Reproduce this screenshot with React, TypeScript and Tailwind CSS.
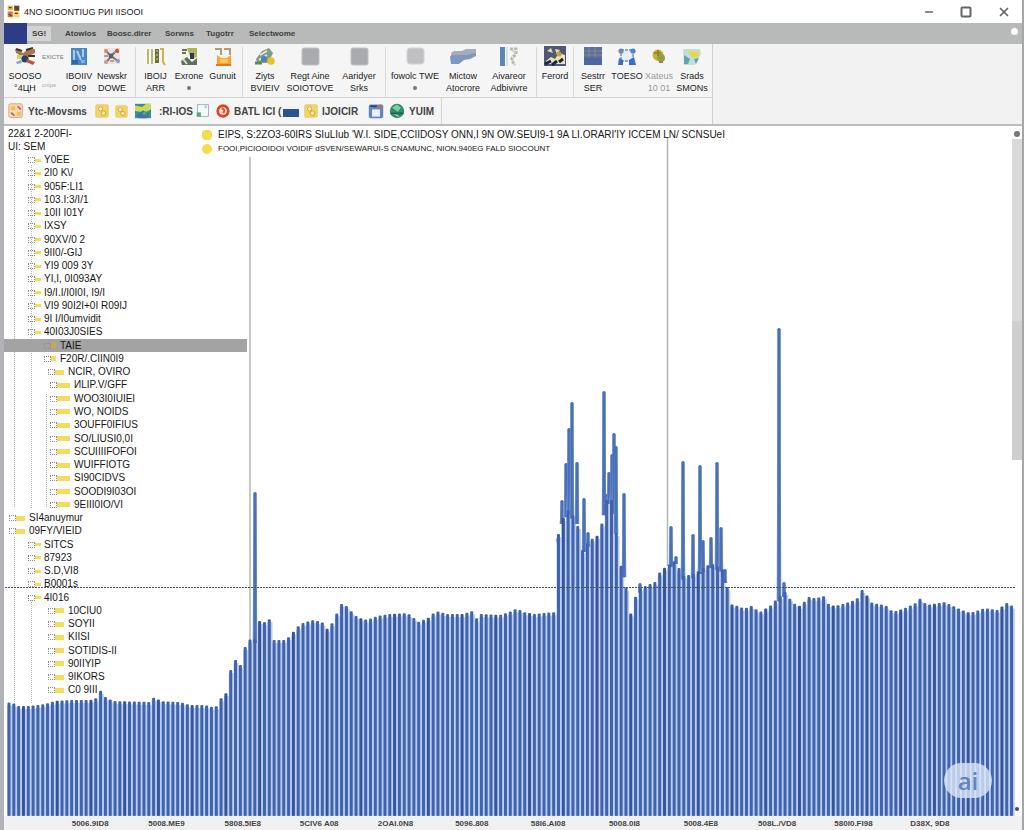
/**
 * App.tsx — Desktop signal viewer window.
 *
 * Layout, top to bottom: title bar, menu bar, ribbon with a quick-access row,
 * workspace (tree + level plot) and the frequency axis.
 */

import type { ReactNode } from 'react'
import { Minus, Square, X } from 'lucide-react'

// ---------------------------------------------------------------- icons

const PAPER = '#f4f1ea'

/** Small 20x20 drawings used by the ribbon and the quick-access row. */
const ICONS: Record<string, ReactNode> = {
  app: (
    <>
      <path d="M1 1h8v7H1z" fill="#f0b93c" />
      <path d="M11 1h8v8h-8z" fill="#6b4a3a" />
      <path d="M1 10h8v9H1z" fill="#d9784a" />
      <path d="M10 10h9v9h-9z" fill="#f3d65c" />
      <path d="M3 4h4M13 3l4 4M12 13h5M3 14l4 3" stroke="#5a3f33" strokeWidth="2" />
    </>
  ),
  tools: (
    <>
      <path d="M0 2l8 4 4-3 8-1v4l-6 3-6 1-7-4z" fill="#a8764f" />
      <path d="M1 2l6 2M11 3l7-2M13 9h7" stroke="#3c3030" strokeWidth="2" />
      <rect x="2" y="8" width="6" height="4" fill="#d7d063" />
      <circle cx="10" cy="12" r="3.6" fill="#24406f" />
      <path d="M12 12l8 3-2 3-7-3z" fill="#c8503f" />
      <path d="M1 15l5-2 1 3-5 1z" fill="#8fa7c9" />
    </>
  ),
  blueDoc: (
    <>
      <rect x="2" y="1" width="16" height="17" fill="#4a86c6" />
      <path d="M5 3v11M8 4l4 9M14 2v8" stroke="#a9cbeb" strokeWidth="2" />
      <rect x="3" y="13" width="6" height="4" fill="#2c68aa" />
      <rect x="12" y="13" width="4" height="3" fill="#7fb0e0" />
    </>
  ),
  network: (
    <>
      <rect x="2" y="1" width="16" height="16" fill="#ece2e0" />
      <path d="M3 3l6 6 7-7M9 9l-5 7M9 9l8 6" stroke="#8c6a5f" strokeWidth="2" fill="none" />
      <path d="M2 9h4M12 5h5M8 14h4" stroke="#b59d98" strokeWidth="2" />
      <circle cx="4" cy="4" r="2" fill="#d08a72" />
      <circle cx="15" cy="4" r="2" fill="#c7513f" />
      <circle cx="9" cy="9" r="2.4" fill="#4b5f86" />
      <circle cx="4" cy="15" r="2" fill="#b4a39f" />
      <circle cx="16" cy="14" r="2" fill="#7aa0cf" />
    </>
  ),
  books: (
    <>
      <path d="M2 2v15M6 2v15" stroke="#a5a744" strokeWidth="1.5" />
      <path d="M9 2h4v14H9z" fill="#6a6d3c" />
      <path d="M14 2l3 0 0 13 2 3" stroke="#c6b64a" strokeWidth="2" fill="none" />
      <path d="M10 4h2M10 8h2M10 12h2" stroke="#e6d97b" />
    </>
  ),
  explore: (
    <>
      <rect x="3" y="1" width="15" height="17" fill={PAPER} />
      <path d="M8 1h10v9l-6 2z" fill="#aeb353" />
      <path d="M3 3h5M3 6h4" stroke="#6f7350" strokeWidth="2" />
      <path d="M2 14l6-4 5 5 5-4v7H3z" fill="#5d7160" />
      <rect x="11" y="6" width="4" height="6" fill="#2d3b52" />
      <path d="M4 12l4 5" stroke="#d9dfc9" strokeWidth="2" />
    </>
  ),
  flask: (
    <>
      <path d="M4 8v9h14V8l-4 3H8z" fill="#f2a62f" />
      <path d="M2 2h6v6M11 2h6v6" stroke="#b39c70" strokeWidth="2" fill="none" />
      <path d="M7 12h8v4H7z" fill="#fbc95b" />
      <path d="M3 18h15" stroke="#e0762a" strokeWidth="2" />
    </>
  ),
  parts: (
    <>
      <path d="M1 12l6-8 7-3 4 5-5 10H2z" fill="#7e9c8c" />
      <path d="M5 8l7-4M4 13l8-5" stroke="#e9eedb" strokeWidth="1.5" />
      <circle cx="9" cy="12" r="3" fill="#4f7fb5" />
      <circle cx="16" cy="14" r="3.8" fill="#e7c22e" />
      <path d="M0 16h7" stroke="#5b8d4f" strokeWidth="3" />
    </>
  ),
  block: <rect x="2" y="1" width="17" height="17" rx="2" fill="#a9abae" stroke="#bfc1c3" />,
  blockLight: <rect x="2" y="1" width="17" height="16" rx="3" fill="#bfc0c2" stroke="#d2d3d4" />,
  cloud: (
    <>
      <path d="M-3 10l3-5h9l4-3h10v7l-6 3-6 1-5 4h-8z" fill="#8097bf" />
      <path d="M-2 6l3-2h8l4-2h10v4l-10 2H-1z" fill="#a7acb6" />
    </>
  ),
  pillar: (
    <>
      <rect x="1" y="0" width="5" height="19" fill="#5c86b4" />
      <path d="M8 0v19" stroke="#b9c9da" />
      <path d="M11 2h6v5l-4 4v3l3 4" stroke="#b4bab0" strokeWidth="3" fill="none" strokeDasharray="3 1" />
      <circle cx="15" cy="4" r="2" fill="#d7d8cd" />
    </>
  ),
  photo: (
    <>
      <rect x="-1" y="-1" width="22" height="20" fill="#4f5874" />
      <path d="M1 14l5-4 4 2 4-6 6 2v9H1z" fill="#e9e2c8" />
      <path d="M2 4l4-3 2 5zM10 2l5 1-3 5z" fill="#dfd9b0" />
      <circle cx="14" cy="7" r="2.5" fill="#c99e35" />
      <path d="M0 17l6-3M7 18l5-4M14 15l4-3" stroke="#20263a" strokeWidth="3" />
    </>
  ),
  board: (
    <>
      <rect x="1" y="0" width="18" height="18" fill="#5e6f93" />
      <path d="M1 4h18M1 8h18M6 0v10M12 0v10" stroke="#7f8ba5" />
      <rect x="1" y="11" width="18" height="7" fill="#4d68a0" />
    </>
  ),
  frame: (
    <>
      <path d="M4 3h12v11H4z" fill="#e3eefa" stroke="#8caad4" strokeDasharray="3 1" strokeWidth="2" />
      <circle cx="4" cy="4" r="2.6" fill="#7489aa" />
      <circle cx="16" cy="4" r="2.6" fill="#4b7fd0" />
      <path d="M2 11l4 2 0 5H1zM12 13l5-3 2 8h-7z" fill="#3a6ecb" />
    </>
  ),
  plug: (
    <>
      <circle cx="9" cy="8" r="5.500" fill="#c6b32f" />
      <circle cx="12" cy="11" r="4" fill="#8fa04b" />
      <path d="M5 6h7M9 3v6" stroke="#8f7d2a" strokeWidth="1.5" />
      <path d="M10 15h4" stroke="#c4744a" strokeWidth="2" />
    </>
  ),
  map: (
    <>
      <path d="M1 2h17l1 5-6 11H2z" fill="#c3dfd2" />
      <path d="M6 4l11 1v4l-6 2z" fill="#ecd647" />
      <path d="M2 8l6 4-2 5H2zM12 12l5-1-3 6z" fill="#5aa5b6" />
    </>
  ),
  chip: (
    <>
      <rect x="1" y="1" width="17" height="17" rx="2" fill="#f5d9b9" stroke="#dc9477" />
      <path d="M4 4h5v5H4zM11 11h5v5h-5z" fill="#eac04e" />
      <path d="M12 4l4 4M4 12l4 4" stroke="#c0594a" strokeWidth="2" />
    </>
  ),
  tile: (
    <>
      <rect x="1" y="1" width="18" height="18" rx="2" fill="#f3d65c" stroke="#dfc37c" />
      <circle cx="8" cy="7" r="3" fill="#fdf3c1" stroke="#cf8d3b" />
      <circle cx="12" cy="13" r="3.4" fill="#fbe998" stroke="#b58a42" />
    </>
  ),
  land: (
    <>
      <rect x="0" y="1" width="20" height="18" fill="#3c8f8c" />
      <path d="M0 3l9 2 5-4h6v7l-8 4-12-2z" fill="#cfd955" />
      <path d="M2 15l8-6 8 4-3 6H5z" fill="#3d72b4" />
      <circle cx="12" cy="13" r="2.4" fill="#4fae5b" />
    </>
  ),
  page: (
    <>
      <rect x="2" y="1" width="16" height="17" fill="#f3fbf8" stroke="#7f9fae" />
      <path d="M1 12h6v6H1z" fill="#5ba184" />
      <path d="M12 2h4v4h-4z" fill="#b7d2dd" />
    </>
  ),
  target: (
    <>
      <circle cx="10" cy="10" r="7.500" fill="#fbe3d6" stroke="#d8482b" strokeWidth="4" />
      <path d="M8 7c4-1 5 3 2 6" stroke="#e0582f" strokeWidth="3" fill="none" />
    </>
  ),
  calendar: (
    <>
      <rect x="1" y="2" width="18" height="17" rx="2" fill="#5f86bd" />
      <rect x="5" y="8" width="10" height="9" fill="#e9f0f8" />
      <path d="M3 4h8" stroke="#27416f" strokeWidth="2" />
      <circle cx="15" cy="4" r="2" fill="#d9624d" />
    </>
  ),
  globe: (
    <>
      <circle cx="10" cy="10" r="9" fill="#2e8f6c" />
      <path d="M4 6l6-4 5 4-4 5zM4 13h6l3 5" fill="#86c9a8" />
      <path d="M2 13h16" stroke="#1d5d48" strokeWidth="2" />
    </>
  ),
}

function Icon({ name, className = 'size-5' }: { name: string; className?: string }) {
  return (
    <svg viewBox="0 0 20 20" fill="none" aria-hidden="true" className={`shrink-0 overflow-visible ${className}`}>
      {ICONS[name]}
    </svg>
  )
}

// ---------------------------------------------------------------- ribbon

interface Tool {
  icon: string
  top: string
  bottom?: string
  width: string
  muted?: boolean
  /** Draws the small round launcher under the first label line. */
  dot?: boolean
}

const GROUPS: { width: string; tools: Tool[] }[] = [
  {
    width: 'w-[107px]',
    tools: [
      { icon: 'books', top: 'IBOIJ', bottom: 'ARR', width: 'w-[32px]' },
      { icon: 'explore', top: 'Exrone', width: 'w-[35px]', dot: true },
      { icon: 'flask', top: 'Gunuit', width: 'w-[32px]' },
    ],
  },
  {
    width: 'w-[143px]',
    tools: [
      { icon: 'parts', top: 'Ziyts', bottom: 'BVIEIV', width: 'w-[36px]' },
      { icon: 'block', top: 'Regt Aine', bottom: 'SOIOTOVE', width: 'w-[54px]' },
      { icon: 'block', top: 'Aaridyer', bottom: 'Srks', width: 'w-[44px]' },
    ],
  },
  {
    width: 'w-[151px]',
    tools: [
      { icon: 'blockLight', top: 'fowolc TWE', width: 'w-[52px]', dot: true },
      { icon: 'cloud', top: 'Mictow', bottom: 'Atocrore', width: 'w-[44px]' },
      { icon: 'pillar', top: 'Aivareor', bottom: 'Adbivivre', width: 'w-[48px]' },
    ],
  },
  { width: 'w-[37px]', tools: [{ icon: 'photo', top: 'Ferord', width: 'w-[32px]' }] },
  {
    width: 'w-[138px]',
    tools: [
      { icon: 'board', top: 'Sestrr', bottom: 'SER', width: 'w-[34px]' },
      { icon: 'frame', top: 'TOESO', width: 'w-[34px]' },
      { icon: 'plug', top: 'Xateus', bottom: '10 01', width: 'w-[30px]', muted: true },
      { icon: 'map', top: 'Srads', bottom: 'SMONs', width: 'w-[36px]' },
    ],
  },
]

function ToolButton({ icon, top, bottom, width, muted, dot }: Tool) {
  return (
    <button
      type="button"
      className={`flex shrink-0 flex-col items-center whitespace-nowrap text-[9px] leading-3 ${width} ${
        muted ? 'text-[#999]' : 'text-[#222]'
      }`}
    >
      <Icon name={icon} />
      <span className="mt-[3px]">{top}</span>
      {bottom && <span>{bottom}</span>}
      {dot && <span className="mt-1 size-1 rounded-full bg-[#777]" />}
    </button>
  )
}

function Ribbon() {
  return (
    <div className="flex h-[82px] border-b-2 border-[#bdbdbd] bg-[#f2f2f2]">
      <div className="flex flex-col border-r border-[#cfcfcf] bg-[#f5f5f5] pt-[3px]">
        <div className="flex h-[51px] border-b border-[#d4d4d4]">
          <div className="flex w-[132px] items-start border-r border-[#d8d8d8] pl-1">
            <ToolButton icon="tools" top="SOOSO" bottom="°4ЦН" width="w-[34px]" />
            <div className="flex w-[22px] flex-col pt-1 text-[6px] leading-3 whitespace-nowrap text-[#777]">
              <span>EXICTE</span>
              <span className="mt-4 text-[#aaa]">cnips</span>
            </div>
            <ToolButton icon="blueDoc" top="IBOIIV" bottom="OI9" width="w-[30px]" />
            <ToolButton icon="network" top="Newskr" bottom="DOWE" width="w-[36px]" />
          </div>
          {GROUPS.map((group, i) => (
            <div
              key={i}
              className={`flex items-start justify-center border-r border-[#d8d8d8] last:border-r-0 ${group.width}`}
            >
              {group.tools.map((tool) => (
                <ToolButton key={tool.top} {...tool} />
              ))}
            </div>
          ))}
        </div>
        <QuickBar />
      </div>
    </div>
  )
}

function QuickBar() {
  const button = 'flex shrink-0 items-center whitespace-nowrap'
  return (
    <div className="flex h-[26px] w-[438px] items-center border-r border-[#d4d4d4] pl-1 text-[10px] font-bold text-[#444]">
      <button type="button" className={`${button} w-[87px] gap-1`}>
        <Icon name="chip" className="size-4" />
        Ytc-Movsms
      </button>
      <button type="button" aria-label="Layers" className="w-5 shrink-0">
        <Icon name="tile" className="size-[14px]" />
      </button>
      <button type="button" aria-label="Markers" className="w-5 shrink-0">
        <Icon name="tile" className="size-[13px]" />
      </button>
      <button type="button" className={`${button} w-[61px] gap-2`}>
        <Icon name="land" className="size-4" />
        :RI-IOS
      </button>
      <button type="button" aria-label="Page" className="w-5 shrink-0">
        <Icon name="page" className="size-[14px]" />
      </button>
      <button type="button" className={`${button} w-[62px] gap-1`}>
        <Icon name="target" className="size-[14px]" />
        BATL ICI
      </button>
      <button type="button" aria-label="Range" className={`${button} w-[26px]`}>
        (<span className="mt-1 ml-[2px] h-2 w-4 bg-[#2a5394]" />
      </button>
      <button type="button" className={`${button} w-[64px] gap-1`}>
        <Icon name="tile" className="size-[14px]" />
        IJOICIR
      </button>
      <button type="button" aria-label="Calendar" className="w-[21px] shrink-0">
        <Icon name="calendar" className="size-4" />
      </button>
      <button type="button" className={`${button} gap-1`}>
        <Icon name="globe" className="size-4" />
        YUIM
      </button>
    </div>
  )
}

// ---------------------------------------------------------------- tree

/** Indent and lead-column classes for each kind of row. */
const LEVELS = {
  root: { pad: 'pl-1', lead: 'w-0' },
  branch: { pad: 'pl-[5px]', lead: 'w-5' },
  item: { pad: 'pl-6', lead: 'w-4' },
  sub: { pad: 'pl-10', lead: 'w-4' },
  leaf: { pad: 'pl-11', lead: 'w-5' },
  deep: { pad: 'pl-[46px]', lead: 'w-6' },
}

type Level = keyof typeof LEVELS

const TREE: [Level, string][] = [
  ['root', '22&1 2-200FI-'],
  ['root', 'UI: SEM'],
  ['item', 'Y0EE'],
  ['item', '2I0 K\\/'],
  ['item', '905F:LI1'],
  ['item', '103.I:3/I/1'],
  ['item', '10II I01Y'],
  ['item', 'IXSY'],
  ['item', '90XV/0 2'],
  ['item', '9II0/-GIJ'],
  ['item', 'YI9 009 3Y'],
  ['item', 'YI,I, 0I093AY'],
  ['item', 'I9/I.I/I0I0I, I9/I'],
  ['item', 'VI9 90I2I+0I R09IJ'],
  ['item', '9I I/I0umvidit'],
  ['item', '40I03J0SIES'],
  ['sub', 'TAIE'],
  ['sub', 'F20R/.CIIN0I9'],
  ['leaf', 'NCIR, OVIRO'],
  ['deep', 'ИLIP.V/GFF'],
  ['deep', 'WOO3I0IUIEI'],
  ['deep', 'WO, NOIDS'],
  ['deep', '3OUFF0IFIUS'],
  ['deep', 'SO/LIUSI0,0I'],
  ['deep', 'SCUIIIIFOFOI'],
  ['deep', 'WUIFFIOTG'],
  ['deep', 'SI90CIDVS'],
  ['deep', 'SOODI9I03OI'],
  ['deep', '9EIII0IO/VI'],
  ['branch', 'SI4anuymur'],
  ['branch', '09FY/VIEID'],
  ['item', 'SITCS'],
  ['item', '87923'],
  ['item', 'S.D,VI8'],
  ['item', 'B0001s'],
  ['item', '4I016'],
  ['leaf', '10CIU0'],
  ['leaf', 'SOYII'],
  ['leaf', 'KIISI'],
  ['leaf', 'SOTIDIS-II'],
  ['leaf', '90IIYIP'],
  ['leaf', '9IKORS'],
  ['leaf', 'C0 9III'],
]

const SELECTED = 16

function TreeRow({ level, label, selected }: { level: Level; label: string; selected: boolean }) {
  const { pad, lead } = LEVELS[level]
  const folder = level === 'item' ? 'mr-[3px] h-[3px]' : 'mr-1 h-[5px]'
  return (
    <button
      type="button"
      className={`flex items-center whitespace-nowrap ${pad} ${
        selected ? 'w-[243px] bg-[#a3a3a3]' : 'w-full'
      }`}
    >
      {level !== 'root' && (
        <span className={`flex shrink-0 items-center ${lead}`}>
          <span className="h-[6px] w-[7px] border border-dotted border-[#8c8c8c]" />
          <span className={`flex-1 ${folder} ${selected ? 'bg-[#c9a94a]' : 'bg-[#f4dd5c]'}`} />
        </span>
      )}
      {label}
    </button>
  )
}

function Tree() {
  return (
    <nav
      aria-label="Sources"
      className="grid h-[571px] w-[196px] shrink-0 auto-rows-fr pt-px text-[10px] leading-3 text-[#161616]"
    >
      {TREE.map(([level, label], i) => (
        <TreeRow key={i} level={level} label={label} selected={i === SELECTED} />
      ))}
    </nav>
  )
}

// ---------------------------------------------------------------- plot

const BASE_Y = 816
const PITCH = 4.82

/** Noise-floor outline as [x, y] pairs. */
const FLOOR: [number, number][] = [
  [6, 702], [13, 703], [17, 706], [30, 706], [45, 704], [55, 701], [70, 700], [90, 700],
  [97, 698], [101, 690], [106, 698], [115, 701], [150, 702], [155, 696], [160, 701],
  [180, 702], [190, 705], [205, 705], [212, 707], [217, 706], [219, 700], [224, 696],
  [228, 690], [231, 668], [234, 656], [237, 664], [243, 666], [246, 640], [255, 639],
  [259, 621], [265, 622], [269, 617], [272, 640], [286, 640], [295, 630], [300, 624],
  [312, 620], [322, 622], [326, 630], [333, 622], [340, 606], [343, 602], [350, 610],
  [357, 617], [367, 620], [377, 616], [390, 614], [407, 613], [412, 616], [418, 622],
  [428, 618], [436, 611], [447, 614], [466, 614], [470, 608], [476, 619], [480, 614],
  [500, 615], [512, 611], [517, 608], [523, 612], [535, 614], [555, 612], [557, 540],
  [562, 520], [568, 510], [577, 520], [581, 552], [590, 540], [600, 534], [606, 500],
  [613, 500], [619, 560], [625, 576], [628, 612], [632, 614],
  [637, 590], [645, 586], [655, 582], [661, 570], [667, 566], [676, 560], [682, 576],
  [694, 574], [706, 566], [712, 564], [722, 568], [728, 590], [730, 604], [738, 606],
  [745, 609], [750, 605], [760, 612], [770, 606], [776, 600], [785, 592], [793, 603],
  [800, 606], [812, 594], [816, 602], [822, 592], [826, 603], [835, 606], [850, 602],
  [858, 598], [861, 586], [865, 600], [868, 593], [872, 603], [885, 605], [893, 612],
  [905, 608], [918, 602], [921, 597], [926, 605], [945, 602], [957, 608], [970, 613],
  [985, 608], [997, 610], [1008, 602], [1016, 610],
]

/** Carriers that rise above the floor as [x, y] pairs. */
const PEAKS: [number, number][] = [
  [255, 492], [558, 538], [562, 500], [566, 463], [569, 428], [572, 402], [577, 462],
  [584, 498], [588, 532], [604, 391], [607, 494], [609, 472], [612, 454], [614, 433],
  [616, 446], [624, 493], [640, 583], [671, 526], [676, 556], [683, 461], [693, 534],
  [700, 465], [703, 540], [711, 537], [717, 462], [721, 527], [725, 569], [779, 328],
  [784, 582],
]

function floorAt(x: number) {
  const i = Math.max(1, FLOOR.findIndex(([px]) => px >= x))
  const [x0, y0] = FLOOR[i - 1]
  const [x1, y1] = FLOOR[i]
  return y0 + ((y1 - y0) * (x - x0)) / (x1 - x0)
}

const BARS = Array.from({ length: 209 }, (_, i) => {
  const x = 9 + i * PITCH
  return { x, y: floorAt(x), dark: i % 7 === 3 }
})

function Plot() {
  return (
    <svg
      viewBox="4 126 1018 690"
      preserveAspectRatio="none"
      role="img"
      aria-label="Level plot"
      className="absolute inset-0 size-full"
    >
      <path d="M14.5 150V508M31.5 165V508M46.5 394V508M14.5 537V704M31.5 600V704" stroke="#b5b5b5" strokeDasharray="1 1" />
      <path d="M250 157V640M667.500 137V566" stroke="#b3b6ba" strokeWidth="1.500" />

      {/* Pale backing shows through between the bars */}
      {BARS.map(({ x, y }) => (
        <rect key={x} x={x - 2} y={y + 3} width={5.2} height={BASE_Y - y - 3} fill="#bccdf3" />
      ))}
      {PEAKS.map(([x, y]) => {
        const bottom = floorAt(x) + 4
        return (
          <g key={x}>
            <path d={`M${x - 2.5} ${bottom}L${x - 1} ${y + 6}h2L${x + 2.5} ${bottom}z`} fill="#9fb6e4" />
            <path d={`M${x - 1.7} ${bottom}V${y + 1}q1.700-2 3.400 0V${bottom}z`} fill="#4a70b8" />
          </g>
        )
      })}
      {BARS.map(({ x, y, dark }) => (
        <rect key={x} x={x - 1.5} y={y} width={3} height={BASE_Y - y} rx={1} fill={dark ? '#34559c' : '#4064ac'} />
      ))}

      <path d="M5 587.500H1016" stroke="#4b4f57" strokeDasharray="2 1" />
    </svg>
  )
}

function Workspace() {
  return (
    <main className="relative flex flex-1 bg-white">
      <Plot />
      <div className="relative flex min-w-0 flex-1">
        <Tree />
        <div className="flex flex-col pt-[2px] pl-[2px] leading-[14px] whitespace-nowrap text-[#161616]">
          <p className="flex items-center gap-[6px] text-[10px]">
            <span className="size-[10px] rounded-sm bg-[#f6dc4a]" />
            EIPS, S:2ZO3-60IRS SIuLIub 'W.I. SIDE,CCIIDOSY ONN,I 9N OW.SEUI9-1 9A LI.ORARI'IY ICCEM LN/ SCNSUeI
          </p>
          <p className="flex items-center gap-[6px] text-[8px]">
            <span className="size-[10px] rounded-full bg-[#f6dc4a]" />
            FOOI,PICIOOIDOI VOIDIF dSVEN/SEWARUI-S CNAMUNC, NION.940EG FALD SIOCOUNT
          </p>
        </div>
      </div>
      <div className="relative flex w-[10px] flex-col">
        <span className="mt-[5px] ml-[2px] size-[6px] rounded-full bg-[#777]" />
        <span className="mt-[2px] h-[182px] bg-[#d9d9d9]" />
        <span className="h-[139px] bg-[#cfcfcf]" />
        <span className="mt-auto mb-[5px] ml-[3px] size-1 rounded-full bg-[#35507f]" />
      </div>
      <div className="absolute right-[30px] bottom-[18px] flex h-[35px] w-12 items-center justify-center rounded-full bg-[#dbe6f6]/80 font-['Open_Sans',sans-serif] text-[24px] leading-none font-semibold text-[#6384c4]">
        ai
      </div>
    </main>
  )
}

// ---------------------------------------------------------------- frame

const TICKS = [
  '5006.9ID8', '5008.ME9', '5808.5IE8', '5CIV6 A08', '2OAI.0N8', '5096.808',
  '58I6.AI08', '5008.0I8', '5008.4E8', '508L./VD8', '580I0.FI98', 'D38X, 9D8',
]

const MENUS = [
  { label: 'Atowlos', width: 'w-[42px]' },
  { label: 'Boosc.direr', width: 'w-[58px]' },
  { label: 'Sorwns', width: 'w-[41px]' },
  { label: 'Tugotrr', width: 'w-[43px]' },
  { label: 'Selectwome', width: 'w-[56px]' },
]

function TitleBar() {
  return (
    <header className="flex h-[23px] items-center bg-white pl-[3px]">
      <Icon name="app" className="size-[13px]" />
      <h1 className="ml-1 flex-1 text-[9px] leading-4 text-[#222]">
        4NO SIOONTIUG PИI IISOOI
      </h1>
      <div className="flex items-center gap-[25px] pr-[11px] text-[#666]">
        <button type="button" aria-label="Minimize"><Minus size={12} strokeWidth={3} /></button>
        <button type="button" aria-label="Maximize"><Square size={12} strokeWidth={4} /></button>
        <button type="button" aria-label="Close"><X size={14} strokeWidth={3} /></button>
      </div>
    </header>
  )
}

function MenuBar() {
  return (
    <nav aria-label="Menu" className="flex h-[21px] items-center bg-[#b8b9b9] text-[8px] font-bold text-[#3e3e3e]">
      <span className="h-full w-[23px] bg-[#2c3c86]" />
      <button type="button" className="mr-[14px] h-[15px] w-6 bg-[#d3d3d3]">SG!</button>
      {MENUS.map(({ label, width }) => (
        <button key={label} type="button" className={`shrink-0 text-left whitespace-nowrap ${width}`}>
          {label}
        </button>
      ))}
      <span className="mr-1 ml-auto mb-1 size-[7px] rounded-full bg-white" />
    </nav>
  )
}

export default function App() {
  return (
    <div className="flex min-h-screen flex-col overflow-hidden border-r-2 border-l-4 border-r-[#a6a6a6] border-l-[#b1b3b8] bg-white font-['Liberation_Sans',Arial,sans-serif]">
      <TitleBar />
      <MenuBar />
      <Ribbon />
      <Workspace />
      <footer className="grid h-[14px] grid-cols-12 bg-[#f1f1f1] pr-[54px] pl-12 text-center text-[8px] leading-[16px] font-bold text-[#444]">
        {TICKS.map((tick) => (
          <span key={tick} className="whitespace-nowrap">{tick}</span>
        ))}
      </footer>
    </div>
  )
}
